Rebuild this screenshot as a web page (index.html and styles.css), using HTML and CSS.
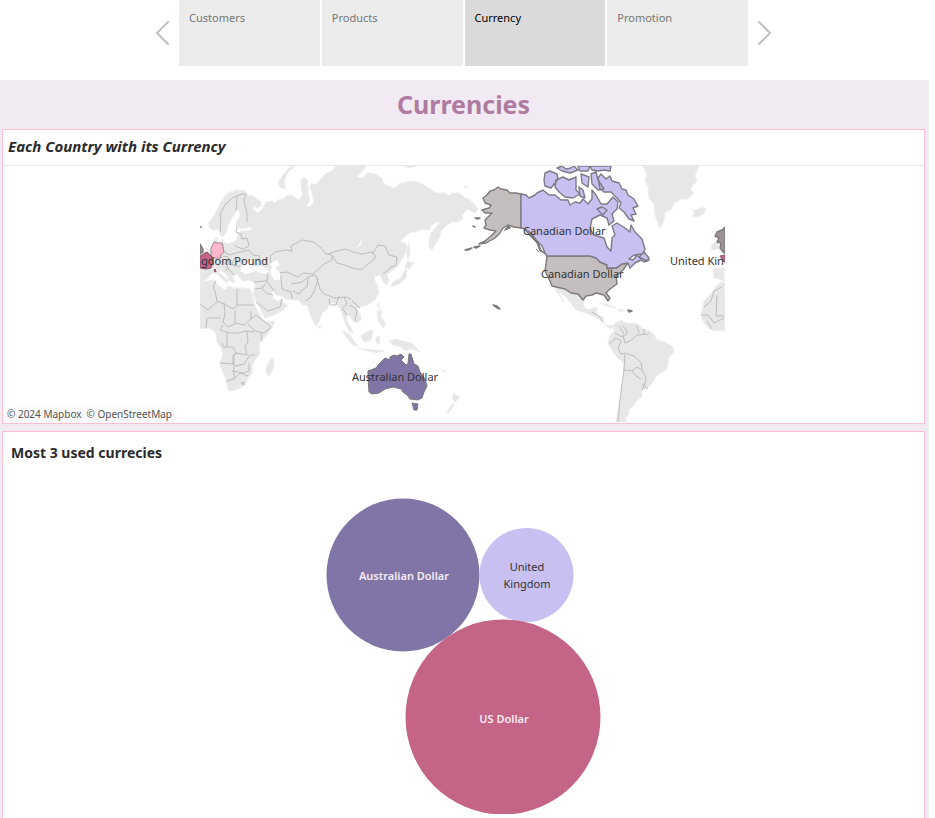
FILE: index.html
```html
<!DOCTYPE html>
<html lang="en">
<head>
<meta charset="utf-8">
<meta name="viewport" content="width=device-width, initial-scale=1">
<title>Currencies</title>
<link rel="stylesheet" href="styles.css">
</head>
<body>
<nav class="story" aria-label="Story points">
  <button class="arrow" type="button" aria-label="Previous"><svg viewBox="0 0 14 26"><path d="M13 2 2 13 13 24"/></svg></button>
  <div class="points">
    <button class="point" type="button">Customers</button>
    <button class="point" type="button">Products</button>
    <button class="point current" type="button" aria-current="page">Currency</button>
    <button class="point" type="button">Promotion</button>
  </div>
  <button class="arrow" type="button" aria-label="Next"><svg viewBox="0 0 14 26"><path d="M1 2 12 13 1 24"/></svg></button>
</nav>
<main class="dashboard">
  <h1 class="title">Currencies</h1>
  <section class="panel">
    <h2 class="map-title">Each Country with its Currency</h2>
    <div class="map-area">
      <svg class="map" viewBox="200 166 527 256">
        <defs>
          <clipPath id="frame"><rect x="200" y="166" width="525" height="256"/></clipPath>
        </defs>
        <g clip-path="url(#frame)">
          <g class="land">
            <path d="M213 230 209 227 209 222 214 216 218 208 221 202 225 196 230 192 237 190 245 191 248 195 253 196 261 202 261 206 257 208 253 205 254 210 258 213 262 209 264 206 266 202 272 201 275 203 278 200 283 199 287 196 292 195 295 198 299 200 303 195 301 188 301 180 304 177 307 180 308 187 308 193 310 200 306 206 310 207 314 202 312 193 310 186 312 183 316 185 320 180 324 175 329 172 333 170 336 166 366 166 362 171 357 177 362 178 368 173 375 174 382 178 383 183 390 187 395 188 399 184 405 182 414 181 422 184 430 189 436 193 444 193 449 196 452 193 459 193 464 197 470 200 474 204 478 209 475 213 469 210 467 209 464 213 462 215 463 219 457 222 452 222 446 226 441 231 440 236 436 243 432 250 429 247 429 241 431 233 436 227 441 222 437 222 432 225 429 230 423 229 415 232 410 232 405 237 400 242 405 243 407 248 404 256 398 266 390 272 387 275 389 281 386 285 383 281 380 275 374 277 375 281 377 285 379 292 375 300 367 305 360 307 356 309 360 314 361 320 357 323 353 321 350 316 347 315 347 322 351 327 353 333 349 331 345 323 342 314 340 308 335 303 330 303 327 309 322 313 319 322 316 326 312 319 309 311 307 305 302 305 299 300 293 300 285 299 282 296 276 295 273 291 271 294 274 299 278 302 282 299 284 303 288 305 283 310 274 315 265 318 261 310 256 301 253 294 255 286 254 282 249 280 243 281 239 277 238 274 232 276 235 281 233 283 229 280 226 274 221 270 218 272 223 276 228 280 227 283 222 279 216 273 211 274 207 279 200 283 200 253 208 251 214 246 220 243 222 239 226 244 234 242 237 239 238 234 241 231 246 231 253 229 250 227 242 229 237 227 236 223 240 216 239 210 236 210 235 214 232 218 228 225 227 231 223 237 220 235 219 229Z"/>
            <path d="M215 246 214 240 218 237 218 242 216 245ZM285 189 280 187 278 183 283 175 290 167 295 166 288 172 284 181ZM404 166 408 168 416 166ZM464 188 468 187 465 186ZM409 242 410 252 408 260 406 252ZM408 261 414 263 409 269 405 267ZM407 269 406 278 399 284 391 287 393 282 401 278 405 270ZM377 304 379 303 379 309ZM318 327 321 325 320 329ZM342 330 350 335 358 347 353 345 346 337ZM361 336 368 331 373 330 371 340 364 342ZM376 337 380 336 379 345 376 342ZM377 311 381 310 381 317 386 325 383 328 378 320ZM357 348 384 351 377 353ZM389 341 396 339 403 341 412 343 420 352 412 349 405 351 401 347 393 345ZM454 393 460 398 455 402 452 399ZM446 414 451 405 455 403 450 411ZM441 369 446 372 443 371Z"/>
            <path d="M200 282 207 281 215 280 217 285 225 290 228 286 234 288 243 288 250 289 252 294 255 306 259 313 263 320 267 322 275 321 272 328 266 336 260 342 259 347 260 353 255 360 252 365 252 373 248 378 245 385 238 389 232 391 228 390 226 379 221 368 220 363 223 354 221 348 217 342 216 334 213 330 207 327 200 329Z"/>
            <path d="M273 358 271 359 267 365 266 373 269 376 273 370 274 361Z"/>
            <path d="M554 287 565 289 578 293 584 299 584 307 588 310 593 308 597 307 597 315 603 317 604 324 609 326 614 325 611 329 606 326 599 319 589 314 576 310 567 298 558 290 564 302 559 295Z"/>
            <path d="M599 303 607 304 616 308 607 306ZM617 309 624 310 620 312Z"/>
            <path d="M613 325 617 322 622 320 625 323 632 323 638 324 643 329 650 331 654 335 657 340 665 342 673 347 674 352 669 357 667 369 661 373 656 376 653 382 648 388 642 390 642 397 636 401 634 405 629 409 629 414 625 418 627 422 616 422 618 408 621 396 623 382 624 364 615 355 608 343 610 335 614 331Z"/>
            <path d="M643 166 647 174 645 181 648 187 649 199 654 204 655 215 660 228 664 221 665 212 672 209 674 203 681 199 688 199 694 193 690 189 697 181 695 175 699 166ZM692 210 695 213 692 216 697 217 703 214 706 209 701 207 697 210Z"/>
            <path d="M711 245 716 242 719 244 718 249 712 250ZM713 269 724 268 724 280 714 278ZM725 282 717 285 711 294 704 301 703 307 701 313 702 319 708 328 714 331 725 330ZM719 284 724 281 725 279Z"/>
          </g>
          <g class="water"><path d="M240 271 244 263 251 261 253 267 261 266 269 271 265 274 255 271 246 274ZM270 264 277 260 280 265 275 268 280 273 280 280 274 280 270 272 272 267ZM358 246 362 239 361 244 356 249Z"/></g>
          <g class="borders">
            <path d="M220 232 221 221 220 214 225 205 232 198 237 196 236 211M237 196 242 194 246 194 244 201 247 213 247 222M237 227 236 232 241 234 242 239 247 238 249 246 243 249 235 246M223 244 223 251 229 255 240 252 249 250 253 255 260 256 258 261M223 256 228 257 229 264 236 266M235 257 232 264 240 267M221 261 228 265 226 271M228 268 234 275M270 257 275 252 286 250 292 251 291 246 302 240 314 242 320 247 326 254 332 255 332 260 324 264 313 274 303 273 298 277 287 272 280 273M270 257 271 263M328 254 337 251 346 249 353 252 362 254 372 252 376 256 373 260 362 269 355 269 345 265 337 263 333 256M372 254 378 245 385 246 389 255 397 257 396 265 390 268 383 274M281 276 282 289 291 292 292 299M291 284 302 282 308 277 307 287 301 291 299 294 293 291M308 277 315 275 318 279 315 289 311 297 305 301M316 276 320 289 324 294 335 298 345 297 351 299M329 299 330 305 336 305 339 296M344 297 347 304 342 308 347 315M352 301 360 308M350 305 357 310 355 321M254 282 267 281 268 274M267 281 274 291M255 289 262 288 266 283M262 288 266 293 273 295M256 302 268 311 280 307 282 299"/>
            <path d="M216 281 213 287 215 291 217 301 224 304 233 309 237 306 237 289M237 305 254 305M224 303 225 314 223 322 228 327 235 324 235 310M200 304 208 310 217 302M207 318 206 329M208 318 221 318M223 325 220 330 230 333 238 333 246 331 254 332M235 323 244 325 251 319 251 311M251 319 256 315 261 319 271 327 264 333 255 331 248 324M261 333 262 341M247 332 248 342 245 346 247 355 236 353 233 347 223 347 222 343M227 332 227 346M220 363 234 364 236 366 244 364 250 355 255 355M234 354 234 379 226 381M233 364 233 355 237 353M232 371 243 373 249 371 249 363M234 379 240 373 248 376M241 383 244 382 244 385Z"/>
            <path d="M615 333 622 337 627 334 626 329 622 326M623 335 625 343 630 341 637 335 649 334M609 344 616 338 621 341 618 349 621 354 625 353 634 356 641 363 642 370 646 377 645 383 642 390M625 354 624 370 632 371 637 367 642 370M632 371 636 376 641 379M624 370 622 384 620 400 618 422M642 384 648 389M619 326 624 334M637 326 639 333M644 329 644 334M592 312 597 315 600 317 603 322M704 307 711 301 714 291 722 287M717 295 716 316 724 316M701 315 708 315 714 323 724 318M707 321 712 329"/>
          </g>
          <g class="usa">
            <path d="M521 194 516 193 510 193 507 190 501 189 498 187 494 190 490 191 487 195 483 198 485 203 491 205 489 208 482 210 485 213 492 213 489 216 485 220 486 225 484 228 490 230 496 231 491 236 485 241 479 244 486 243 495 238 500 233 503 228 508 225 514 227 521 228Z"/>
            <path d="M547 256 590 256 596 258 600 262 607 265 607 269 617 268 622 264 628 263 623 270 616 276 617 284 610 289 606 293 610 298 608 301 604 295 596 293 592 295 586 296 583 300 578 294 571 293 565 289 552 286 549 279 545 271Z"/>
            <path d="M465 250 472 248 468 250ZM474 247 480 246 476 248ZM475 218 480 218 478 219ZM473 226 475 227ZM493 305 497 306 500 309 497 308ZM628 310 632 311 629 312Z"/>
          </g>
          <g class="canada">
            <path d="M521 194 526 195 529 198 535 195 537 193 543 190 549 195 555 195 561 200 568 200 570 205 575 202 580 203 583 199 588 204 592 199 592 190 596 195 601 204 607 204 613 197 618 202 617 209 612 214 614 221 609 225 607 218 600 215 592 219 590 229 594 235 604 238 607 247 611 251 612 238 615 235 612 226 617 223 625 228 630 232 631 225 635 232 642 239 645 249 643 254 634 255 629 259 633 260 637 255 640 258 645 256 649 260 644 262 641 260 635 263 630 268 628 263 622 264 616 268 607 268 607 265 600 262 596 258 590 256 547 256 545 253 542 246 536 240 531 233 525 229 521 228Z"/>
            <path d="M545 173 550 171 557 174 558 179 555 183 551 188 545 186 544 180ZM556 180 563 177 569 180 576 177 576 190 580 194 573 198 565 197 559 192 555 187ZM557 168 562 166 566 169 571 168 574 166 578 170 570 173 562 171ZM578 166 590 166 588 171 580 171ZM581 174 589 177 588 187 582 183ZM579 187 583 190 585 198 580 196ZM591 174 596 172 598 180 604 189 598 190 592 184ZM590 166 611 166 610 171 604 170 598 171 592 170ZM598 178 601 174 606 179 610 176 612 181 619 183 622 189 626 190 628 195 634 199 638 206 633 208 636 214 631 215 634 221 629 219 624 212 619 208 621 203 617 198 611 192 604 192 600 189ZM597 209 602 207 607 210 603 215ZM639 257 644 252 649 258 647 261Z"/>
          </g>
          <path class="coast" d="M524 229 529 233 532 235 538 242 541 250 546 254 540 251 537 243 532 238ZM504 231 508 226 511 228M536 249 539 252"/>
          <path class="australia" d="M394 355 397 356 401 354 404 357 401 360 406 365 408 364 409 354 411 354 414 364 418 366 420 372 425 379 427 386 424 392 422 398 418 400 410 399 407 395 403 392 401 389 393 387 385 389 379 393 372 394 369 392 368 378 368 371 376 368 379 364 385 358 390 360 390 357ZM412 403 418 404 417 410 414 410Z"/>
          <path class="france" d="M200 256 207 252 212 257 213 263 211 268 206 269 200 268ZM215 269 216 272 214 271ZM725 255 720 256 724 262 725 262Z"/>
          <path class="germany" d="M214 242 218 243 222 243 224 252 221 255 221 258 214 258 211 255 211 248Z"/>
          <path class="britain" d="M200 244 203 249 203 252 200 254ZM201 226V228M725 227 722 230 717 232 715 236 719 238 717 242 721 243 720 248 724 253 725 253Z"/>
        </g>
        <g class="map-labels">
          <text x="201" y="265">gdom Pound</text>
          <text x="670" y="265">United Kin</text>
          <text x="523" y="235">Canadian Dollar</text>
          <text x="541" y="278">Canadian Dollar</text>
          <text x="352" y="381">Australian Dollar</text>
        </g>
      </svg>
      <p class="credits"><a href="#mapbox">© 2024 Mapbox</a><a href="#osm">© OpenStreetMap</a></p>
    </div>
  </section>
  <section class="panel used">
    <h2 class="used-title">Most 3 used currecies</h2>
    <svg class="bubbles" viewBox="326 498 275 316">
      <circle class="violet" cx="403" cy="575" r="76.5"/>
      <circle class="lilac" cx="526.5" cy="575" r="47"/>
      <circle class="rose" cx="503" cy="717" r="97.5"/>
      <text class="light" x="404" y="580">Australian Dollar</text>
      <text x="527" y="571">United</text>
      <text x="527" y="588">Kingdom</text>
      <text class="light" x="504" y="723">US Dollar</text>
    </svg>
  </section>
</main>
</body>
</html>
```
FILE: styles.css
```css
* { box-sizing: border-box; }

body {
  margin: 0;
  min-height: 100vh;
  padding-right: 6px;
  display: flex;
  flex-direction: column;
  background: #fff;
  color: #2b2b2b;
  font-family: "Noto Sans", "Open Sans", sans-serif;
}

button { border: 0; font: inherit; cursor: pointer; }
h1, h2, p { margin: 0; }
svg { display: block; }

.story {
  display: flex;
  justify-content: center;
  align-items: center;
  gap: 10px;
  margin-bottom: 14px;
  padding: 0 4px 0 2px;
}
.points {
  display: grid;
  grid-template-columns: repeat(4, 1fr);
  gap: 2px;
  flex: 0 1 569px;
}
.point {
  display: flex;
  align-items: flex-start;
  height: 66px;
  padding: 10px;
  background: #ececec;
  color: #777;
  font-size: 11px;
  line-height: 16px;
}
.point.current { background: #dadada; color: #000; }
.arrow { width: 14px; padding: 0; background: none; }
.arrow path { fill: none; stroke: #c0c0c0; stroke-width: 2; stroke-linecap: round; }

.dashboard {
  flex: 1;
  display: flex;
  flex-direction: column;
  padding: 0 4px 0 2px;
  background: #f1eaf2;
}
.title {
  height: 49px;
  color: #b07aa1;
  font-size: 25px;
  line-height: 49px;
  text-align: center;
}
.panel {
  margin-bottom: 7px;
  background: #fff;
  border: 1px solid #fabfd2;
}
.map-title {
  padding: 4px 5px 6px;
  border-bottom: 1px solid #e5e5e5;
  font-size: 15px;
  font-style: italic;
  line-height: 25px;
}
.map-area { position: relative; padding-bottom: 1px; }
.map { width: 100%; max-width: 527px; margin: 0 auto; }
.land { fill: #e7e7e7; stroke: #eee; }
.water { fill: #fff; }
.borders { fill: none; stroke: #bdbdbd; stroke-width: 1; stroke-linejoin: round; }
.usa, .canada, .britain { stroke-width: 1.4; stroke-linejoin: round; }
.usa { fill: #c5bebe; stroke: #7d7a7a; }
.britain { fill: #9c9494; stroke: #7d7a7a; }
.canada { fill: #c7c0f0; stroke: #7d7a86; }
.coast { fill: #777; stroke: #777; }
.australia { fill: #8175a8; stroke: #777; }
.france { fill: #c46487; stroke: #8c5268; }
.germany { fill: #ffb8cc; stroke: #a58a92; }
.map-labels { fill: #333; font-size: 11px; }

.credits {
  position: absolute;
  left: 1px;
  bottom: 2px;
  display: flex;
  gap: 5px;
  padding: 0 3px;
  background: #fafafa;
  font-size: 10px;
  line-height: 14px;
}
.credits a { color: #555; text-decoration: none; }

.used { flex: 1; margin-bottom: 0; border-bottom: 0; }
.used-title {
  padding: 8px;
  font-size: 14px;
  line-height: 25px;
}
.bubbles { width: 100%; max-width: 275px; margin: 25px auto 4px; }
.bubbles text { fill: #333; font-size: 11px; text-anchor: middle; }
.bubbles .light { fill: #f5edf3; font-weight: 600; }
.violet { fill: #8175a8; }
.lilac { fill: #c7c0f0; }
.rose { fill: #c46487; }
```
